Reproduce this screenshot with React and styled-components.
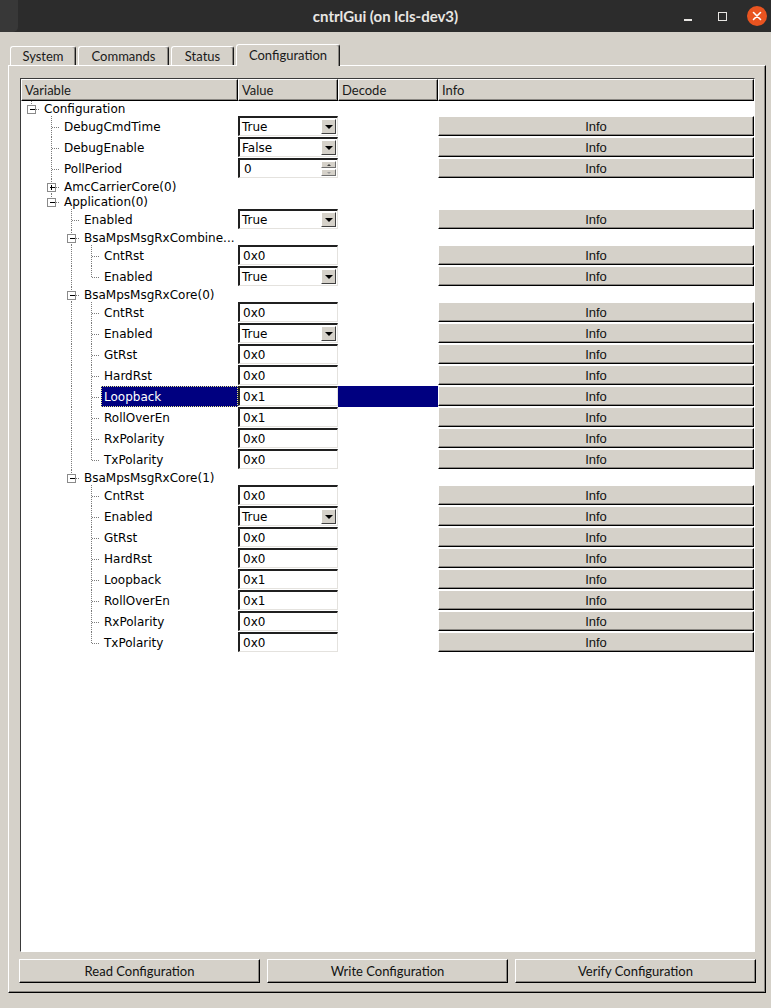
import React from "react";
import styled, { createGlobalStyle } from "styled-components";

const GlobalStyle = createGlobalStyle`
  html, body {
    margin: 0;
    padding: 0;
    background: #ffffff;
  }
  #root {
    width: 778px;
    height: 1008px;
  }
`;

const BEIGE = "#d5d1c9";

const Window = styled.div`
  width: 771px;
  height: 1008px;
  display: flex;
  flex-direction: column;
  background: ${BEIGE};
  overflow: hidden;
`;

const TitleBar = styled.div`
  flex: none;
  height: 32px;
  background: #2c2c2c;
  display: grid;
  grid-template-columns: 1fr auto 1fr;
  align-items: center;
`;

const TitleStub = styled.div`
  align-self: stretch;
  width: 18px;
  background: #383838;
  border-radius: 0 0 5px 0;
`;

const Title = styled.div`
  font: bold 15px "Lato", "Liberation Sans", sans-serif;
  color: #e8e6e3;
`;

const Controls = styled.div`
  justify-self: end;
  display: flex;
  align-items: center;
  padding-right: 4px;
`;

const MinButton = styled.div`
  width: 8px;
  height: 2px;
  margin-top: 8px;
  background: #e8e6e3;
`;

const MaxButton = styled.div`
  box-sizing: border-box;
  width: 9px;
  height: 9px;
  margin-left: 26px;
  border: 1.5px solid #e8e6e3;
`;

const CloseButton = styled.div`
  width: 20px;
  height: 20px;
  margin-left: 20px;
  border-radius: 50%;
  background: #e95420;
  display: flex;
  align-items: center;
  justify-content: center;
`;

const Body = styled.div`
  flex: 1;
  min-height: 0;
  display: flex;
  flex-direction: column;
  padding: 12px 5px 15px 8px;
`;

const TabRow = styled.div`
  flex: none;
  height: 21px;
  display: flex;
  align-items: flex-end;
  gap: 2px;
  padding-left: 2px;
`;

const Tab = styled.div`
  position: relative;
  z-index: ${(p) => (p.$active ? 1 : 0)};
  box-sizing: border-box;
  width: ${(p) => p.$width}px;
  height: ${(p) => (p.$active ? 22 : 19)}px;
  margin-bottom: ${(p) => (p.$active ? -1 : 0)}px;
  background: ${BEIGE};
  border-top: 1px solid #ffffff;
  border-left: 1px solid #ffffff;
  border-right: 1px solid #1a1a1a;
  box-shadow: inset -1px 0 #8a8782;
  border-radius: 3px 3px 0 0;
  display: flex;
  align-items: center;
  justify-content: center;
  padding-bottom: ${(p) => (p.$active ? 2 : 0)}px;
  font: 13px "Lato", "Liberation Sans", sans-serif;
  color: #1a1a1a;
`;

const Panel = styled.div`
  flex: 1;
  min-height: 0;
  display: flex;
  flex-direction: column;
  border-top: 1px solid #ffffff;
  border-left: 1px solid #ffffff;
  border-right: 1px solid #000000;
  border-bottom: 1px solid #000000;
  box-shadow: inset -1px -1px #8a8782;
  padding: 12px 10px 9px 11px;
`;

const Frame = styled.div`
  flex: 1;
  min-height: 0;
  display: flex;
  flex-direction: column;
  background: #ffffff;
  border: 1px solid;
  border-color: #3a3a3a #ffffff #ffffff #3a3a3a;
  overflow: hidden;
`;

const COLUMNS = "217px 100px 100px 1fr";

const Header = styled.div`
  flex: none;
  display: grid;
  grid-template-columns: ${COLUMNS};
  height: 22px;
`;

const HeaderCell = styled.div`
  box-sizing: border-box;
  background: ${BEIGE};
  border-top: 1px solid #ffffff;
  border-left: 1px solid #ffffff;
  border-right: 1px solid #000000;
  border-bottom: 1px solid #000000;
  box-shadow: inset -1px -1px #8a8782;
  padding-left: 3px;
  display: flex;
  align-items: center;
  font: 13px "Lato", "Liberation Sans", sans-serif;
  color: #1a1a1a;
`;

const Row = styled.div`
  display: grid;
  grid-template-columns: ${COLUMNS};
  height: ${(p) => p.$height}px;
`;

const VarCell = styled.div`
  display: flex;
  min-width: 0;
`;

const Label = styled.div`
  flex: 1;
  min-width: 0;
  display: flex;
  align-items: center;
  padding-left: 3px;
  white-space: nowrap;
  overflow: hidden;
  font: 12px "DejaVu Sans", sans-serif;
  color: ${(p) => (p.$selected ? "#ffffff" : "#000000")};
  background: ${(p) => (p.$selected ? "#000080" : "transparent")};
  outline: ${(p) => (p.$selected ? "1px dotted #e8e88a" : "none")};
  outline-offset: -1px;
`;

const Cell = styled.div`
  min-width: 0;
  background: ${(p) => (p.$selected ? "#000080" : "transparent")};
`;

const EditBox = styled.div`
  box-sizing: border-box;
  height: 20px;
  display: flex;
  background: #ffffff;
  border-style: solid;
  border-width: 2px 1px 1px 2px;
  border-color: #202020 #e4e2de #e4e2de #202020;
`;

const EditText = styled.div`
  flex: 1;
  display: flex;
  align-items: center;
  padding-left: ${(p) => p.$pad}px;
  font: 12px "DejaVu Sans", sans-serif;
  color: #000000;
`;

const ArrowButton = styled.div`
  box-sizing: border-box;
  width: 15px;
  margin: 1px;
  background: ${BEIGE};
  border-top: 1px solid #ffffff;
  border-left: 1px solid #ffffff;
  border-right: 1px solid #404040;
  border-bottom: 1px solid #404040;
  display: flex;
  align-items: center;
  justify-content: center;
`;

const DownTriangle = styled.div`
  width: 0;
  height: 0;
  border-left: 4px solid transparent;
  border-right: 4px solid transparent;
  border-top: 4px solid #000000;
`;

const SpinButtons = styled.div`
  width: 15px;
  margin: 1px;
  display: flex;
  flex-direction: column;
  gap: 1px;
`;

const SpinHalf = styled.div`
  flex: 1;
  box-sizing: border-box;
  background: ${BEIGE};
  border-top: 1px solid #ffffff;
  border-left: 1px solid #ffffff;
  border-right: 1px solid #707070;
  border-bottom: 1px solid #707070;
  display: flex;
  align-items: center;
  justify-content: center;
`;

const SmallTriangle = styled.div`
  width: 0;
  height: 0;
  border-left: 2px solid transparent;
  border-right: 2px solid transparent;
  ${(p) =>
    p.$up
      ? "border-bottom: 2px solid #404040;"
      : "border-top: 2px solid #9a9a9a;"}
`;

const InfoButton = styled.div`
  box-sizing: border-box;
  height: 20px;
  background: ${BEIGE};
  border-top: 1px solid #ffffff;
  border-left: 1px solid #ffffff;
  border-right: 1px solid #000000;
  border-bottom: 1px solid #000000;
  box-shadow: inset -1px -1px #8a8782;
  display: flex;
  align-items: center;
  justify-content: center;
  font: 13px "Liberation Sans", Arial, sans-serif;
  color: #111111;
`;

const ButtonRow = styled.div`
  flex: none;
  display: grid;
  grid-template-columns: 1fr 1fr 1fr;
  gap: 7px;
  margin: 7px -1px 0;
`;

const PushButton = styled.div`
  box-sizing: border-box;
  height: 24px;
  background: ${BEIGE};
  border-top: 1px solid #ffffff;
  border-left: 1px solid #ffffff;
  border-right: 1px solid #000000;
  border-bottom: 1px solid #000000;
  box-shadow: inset -1px -1px #8a8782;
  display: flex;
  align-items: center;
  justify-content: center;
  font: 13px "Lato", "Liberation Sans", sans-serif;
  color: #111111;
`;

// tree data
const combo = (value) => ({ type: "combo", value });
const edit = (value) => ({ type: "edit", value });

const core = (selected) => [
  { label: "CntRst", widget: edit("0x0") },
  { label: "Enabled", widget: combo("True") },
  { label: "GtRst", widget: edit("0x0") },
  { label: "HardRst", widget: edit("0x0") },
  { label: "Loopback", widget: edit("0x1"), selected },
  { label: "RollOverEn", widget: edit("0x1") },
  { label: "RxPolarity", widget: edit("0x0") },
  { label: "TxPolarity", widget: edit("0x0") },
];

const tree = [
  {
    label: "Configuration",
    open: true,
    children: [
      { label: "DebugCmdTime", widget: combo("True") },
      { label: "DebugEnable", widget: combo("False") },
      { label: "PollPeriod", widget: { type: "spin", value: "0" } },
      { label: "AmcCarrierCore(0)", collapsed: true },
      {
        label: "Application(0)",
        open: true,
        children: [
          { label: "Enabled", widget: combo("True") },
          {
            label: "BsaMpsMsgRxCombine...",
            open: true,
            children: [
              { label: "CntRst", widget: edit("0x0") },
              { label: "Enabled", widget: combo("True") },
            ],
          },
          { label: "BsaMpsMsgRxCore(0)", open: true, children: core(true) },
          { label: "BsaMpsMsgRxCore(1)", open: true, children: core(false) },
        ],
      },
    ],
  },
];

function flatten(nodes, depth = 0, guides = [], out = []) {
  nodes.forEach((node, i) => {
    const last = i === nodes.length - 1;
    out.push({ ...node, depth, guides, last });
    if (node.open && node.children) {
      flatten(node.children, depth + 1, [...guides, !last], out);
    }
  });
  return out;
}

const rows = flatten(tree);

function Branch({ depth, height, guides, last, expander }) {
  const width = 20 * (depth + 1);
  const mid = Math.ceil(height / 2);
  const cx = 20 * depth + 10.5;
  const dots = {
    stroke: "#7c7c7c",
    strokeWidth: 1,
    strokeDasharray: "1 1",
    shapeRendering: "crispEdges",
  };
  return (
    <svg width={width} height={height} style={{ flex: "none", display: "block" }}>
      {guides.map((on, k) =>
        on ? (
          <line key={k} x1={20 * k + 10.5} y1={0} x2={20 * k + 10.5} y2={height} {...dots} />
        ) : null
      )}
      <line x1={cx} y1={0} x2={cx} y2={last ? mid : height} {...dots} />
      <line x1={cx} y1={mid + 0.5} x2={width - 1} y2={mid + 0.5} {...dots} />
      {expander && (
        <g shapeRendering="crispEdges">
          <rect x={cx - 4} y={mid - 4} width={8} height={8} fill="#ffffff" stroke="#8a8a8a" />
          <line x1={cx - 2} y1={mid + 0.5} x2={cx + 3} y2={mid + 0.5} stroke="#000000" />
          {expander === "plus" && (
            <line x1={cx} y1={mid - 2} x2={cx} y2={mid + 3} stroke="#000000" />
          )}
        </g>
      )}
    </svg>
  );
}

function ValueWidget({ widget }) {
  if (widget.type === "combo") {
    return (
      <EditBox>
        <EditText $pad={2}>{widget.value}</EditText>
        <ArrowButton>
          <DownTriangle />
        </ArrowButton>
      </EditBox>
    );
  }
  if (widget.type === "spin") {
    return (
      <EditBox>
        <EditText $pad={4}>{widget.value}</EditText>
        <SpinButtons>
          <SpinHalf>
            <SmallTriangle $up />
          </SpinHalf>
          <SpinHalf>
            <SmallTriangle />
          </SpinHalf>
        </SpinButtons>
      </EditBox>
    );
  }
  return (
    <EditBox>
      <EditText $pad={3}>{widget.value}</EditText>
    </EditBox>
  );
}

const tabs = [
  { name: "System", width: 66 },
  { name: "Commands", width: 91 },
  { name: "Status", width: 63 },
  { name: "Configuration", width: 104, active: true },
];

export default function App() {
  return (
    <Window>
      <GlobalStyle />
      <TitleBar>
        <TitleStub />
        <Title>cntrlGui (on lcls-dev3)</Title>
        <Controls>
          <MinButton />
          <MaxButton />
          <CloseButton>
            <svg width="10" height="10" viewBox="0 0 10 10">
              <path d="M1.5 1.5 L8.5 8.5 M8.5 1.5 L1.5 8.5" stroke="#ffffff" strokeWidth="1.6" strokeLinecap="round" />
            </svg>
          </CloseButton>
        </Controls>
      </TitleBar>

      <Body>
        <TabRow>
          {tabs.map((t) => (
            <Tab key={t.name} $width={t.width} $active={t.active}>
              {t.name}
            </Tab>
          ))}
        </TabRow>

        <Panel>
          <Frame>
            <Header>
              <HeaderCell>Variable</HeaderCell>
              <HeaderCell>Value</HeaderCell>
              <HeaderCell>Decode</HeaderCell>
              <HeaderCell>Info</HeaderCell>
            </Header>

            {rows.map((r, i) => {
              const height = r.widget ? 21 : 15;
              const expander = r.open ? "minus" : r.collapsed ? "plus" : null;
              return (
                <Row key={i} $height={height}>
                  <VarCell>
                    <Branch
                      depth={r.depth}
                      height={height}
                      guides={r.guides}
                      last={r.last}
                      expander={expander}
                    />
                    <Label $selected={r.selected}>{r.label}</Label>
                  </VarCell>
                  <Cell>{r.widget && <ValueWidget widget={r.widget} />}</Cell>
                  <Cell $selected={r.selected} />
                  <Cell>{r.widget && <InfoButton>Info</InfoButton>}</Cell>
                </Row>
              );
            })}
          </Frame>

          <ButtonRow>
            <PushButton>Read Configuration</PushButton>
            <PushButton>Write Configuration</PushButton>
            <PushButton>Verify Configuration</PushButton>
          </ButtonRow>
        </Panel>
      </Body>
    </Window>
  );
}
